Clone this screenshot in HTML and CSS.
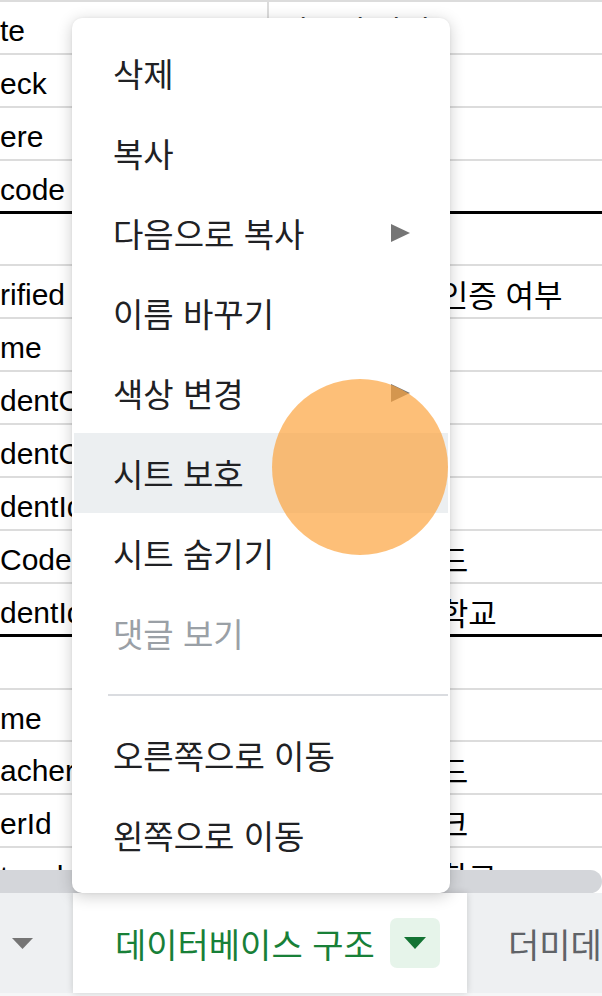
FILE: index.html
```html
<!DOCTYPE html>
<html lang="ko">

<head>
    <meta charset="UTF-8">
    <title>시트 메뉴</title>
    <link rel="stylesheet" href="styles.css">
</head>

<body>
<div class="screen">
    <div class="sheet">
        <div class="row"><div class="cell key">te</div><div class="cell desc">인증된 날짜</div></div>
        <div class="row"><div class="cell key">eck</div><div class="cell desc">확인 여부</div></div>
        <div class="row"><div class="cell key">ere</div><div class="cell desc">가입 경로</div></div>
        <div class="row end"><div class="cell key">code</div><div class="cell desc">우편 번호</div></div>
        <div class="row"><div class="cell key"></div><div class="cell desc"></div></div>
        <div class="row"><div class="cell key">rified</div><div class="cell desc">이메일 주소 인증 여부</div></div>
        <div class="row"><div class="cell key">me</div><div class="cell desc">학생 이름</div></div>
        <div class="row"><div class="cell key">dentCount</div><div class="cell desc">학생 수</div></div>
        <div class="row"><div class="cell key">dentClass</div><div class="cell desc">학생 반</div></div>
        <div class="row"><div class="cell key">dentId</div><div class="cell desc">학생 아이디</div></div>
        <div class="row"><div class="cell key">Code</div><div class="cell desc">소속 학교 코드</div></div>
        <div class="row end"><div class="cell key">dentId</div><div class="cell desc">학생의 소속 학교</div></div>
        <div class="row"><div class="cell key"></div><div class="cell desc"></div></div>
        <div class="row"><div class="cell key">me</div><div class="cell desc">교사 이름</div></div>
        <div class="row"><div class="cell key">acherCode</div><div class="cell desc">담당 교사 코드</div></div>
        <div class="row"><div class="cell key">erId</div><div class="cell desc">교사 초대 링크</div></div>
        <div class="row"><div class="cell key">teacherSchool</div><div class="cell desc">교사의 소속 학교</div></div>
    </div>

    <div class="hscroll"></div>

    <div class="tabbar">
        <div class="tab-menu">
            <svg width="21" height="11" viewBox="0 0 21 11"><path d="M0 0 L21 0 L10.5 11 Z" fill="#757575"/></svg>
        </div>
        <div class="tab active">
            <span>데이터베이스 구조</span>
            <span class="tab-drop">
                <svg width="22" height="12" viewBox="0 0 22 12"><path d="M0 0 L22 0 L11 12 Z" fill="#137333"/></svg>
            </span>
        </div>
        <div class="tab">더미데이터</div>
    </div>

    <div class="menu">
        <div class="menu-item">삭제</div>
        <div class="menu-item">복사</div>
        <div class="menu-item">다음으로 복사
            <svg class="more" width="19" height="18" viewBox="0 0 19 18"><path d="M0 0 L19 9 L0 18 Z" fill="#757575"/></svg>
        </div>
        <div class="menu-item">이름 바꾸기</div>
        <div class="menu-item">색상 변경
            <svg class="more" width="19" height="18" viewBox="0 0 19 18"><path d="M0 0 L19 9 L0 18 Z" fill="#757575"/></svg>
        </div>
        <div class="menu-item hover">시트 보호</div>
        <div class="menu-item">시트 숨기기</div>
        <div class="menu-item disabled">댓글 보기</div>
        <div class="menu-divider"></div>
        <div class="menu-item">오른쪽으로 이동</div>
        <div class="menu-item">왼쪽으로 이동</div>
    </div>

    <div class="touch"></div>
</div>
</body>
</html>
```

FILE: styles.css
```css
* {
    box-sizing: border-box;
}

body {
    margin: 0;
    background-color: #fff;
    font-family: "Liberation Sans", Arial, "Noto Sans CJK KR", sans-serif;
}

.screen {
    position: relative;
    width: 602px;
    height: 996px;
    overflow: hidden;
    display: flex;
    flex-direction: column;
}

/* spreadsheet behind the menu */
.sheet {
    flex: none;
    height: 870px;
    overflow: hidden;
    border-top: 2px solid #dcdcdc;
}

.row {
    display: flex;
    height: 52.9px;
    border-bottom: 2px solid #dcdcdc;
}

.row.end {
    border-bottom: 3px solid #000;
}

.cell {
    padding-top: 12px;
    font-size: 30px;
    line-height: 34px;
    color: #000;
    white-space: nowrap;
    overflow: hidden;
}

.key {
    flex: none;
    width: 269px;
    border-right: 2px solid #dcdcdc;
}

.desc {
    flex: 1;
    padding-top: 14px;
    padding-left: 11px;
    font-size: 31px;
}

.hscroll {
    flex: none;
    height: 23px;
    background-color: #d4d6da;
    border-radius: 0 12px 12px 0;
}

/* sheet tabs */
.tabbar {
    flex: 1;
    display: flex;
    background-color: #eef0f2;
    border-bottom: 3px solid #f5f6f7;
    font-family: "Noto Sans CJK KR", sans-serif;
    font-size: 34px;
}

.tab-menu {
    flex: none;
    width: 73px;
    display: flex;
    align-items: center;
    padding-left: 12px;
}

.tab {
    display: flex;
    align-items: center;
    padding-left: 41px;
    color: #5f6368;
    white-space: nowrap;
}

.tab.active {
    flex: none;
    width: 394px;
    padding-left: 42px;
    background-color: #fff;
    color: #188038;
    box-shadow: 0 0 7px rgba(0, 0, 0, 0.16);
}

.tab-drop {
    margin-left: auto;
    margin-right: 27px;
    width: 50px;
    height: 50px;
    border-radius: 7px;
    background-color: #e6f4ea;
    display: flex;
    align-items: center;
    justify-content: center;
}

/* context menu */
.menu {
    position: absolute;
    left: 72px;
    top: 18px;
    width: 378px;
    height: 875px;
    padding: 15px 2px 0;
    background-color: #fff;
    border-radius: 10px;
    box-shadow: 0 3px 16px rgba(0, 0, 0, 0.2), 0 0 3px rgba(0, 0, 0, 0.06);
    font-family: "Noto Sans CJK KR", sans-serif;
    font-size: 33px;
    color: #202124;
    z-index: 2;
}

.menu-item {
    height: 80px;
    display: flex;
    align-items: center;
    justify-content: space-between;
    padding: 0 38px 0 39px;
}

.menu-item.hover {
    background-color: #eceff1;
}

.menu-item.disabled {
    color: #9aa0a6;
}

.menu-divider {
    height: 2px;
    margin: 21px 0 19px 34px;
    background-color: #dadce0;
}

/* finger touch indicator */
.touch {
    position: absolute;
    left: 272px;
    top: 379px;
    width: 176px;
    height: 176px;
    border-radius: 50%;
    background-color: rgba(252, 164, 62, 0.7);
    z-index: 3;
}
```
